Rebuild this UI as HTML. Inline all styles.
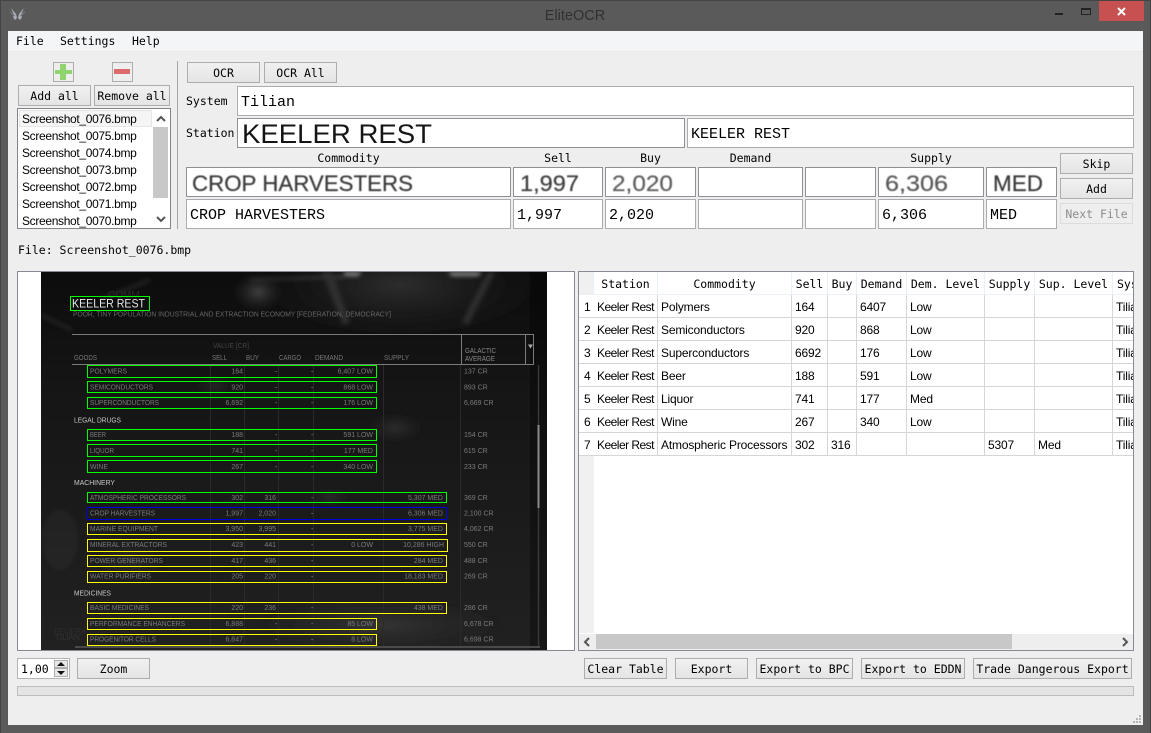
<!DOCTYPE html>
<html><head><meta charset="utf-8"><title>EliteOCR</title>
<style>
html,body{margin:0;padding:0;width:1151px;height:733px;overflow:hidden;background:#5a5a5a}
*{box-sizing:border-box}
#w{position:relative;width:1151px;height:733px;overflow:hidden;font-family:"DejaVu Sans Mono","Liberation Mono",monospace;font-size:11.5px;color:#000}
.a,.b,.i,.i2,.t,.c,.s,.k{position:absolute}
.b{background:linear-gradient(#f1f1f1,#e4e4e4);border:1px solid #adadad;text-align:center;line-height:20px;white-space:nowrap;overflow:hidden}
.i{background:#fff;border:1px solid #8f9095;padding-left:3px;white-space:nowrap}
.i2{background:#fff;border:1px solid #acacb0;padding-left:3px;white-space:nowrap;font-family:"Liberation Mono",monospace;font-size:15px;line-height:31px}
.t{white-space:nowrap;line-height:14px}
.c{white-space:nowrap;text-align:center;line-height:14px}
.s{font-family:"Liberation Sans",sans-serif;font-size:12px;letter-spacing:-.17px;white-space:nowrap;line-height:14px}
.l{letter-spacing:-.33px}
.k{font-family:"Liberation Sans",sans-serif;font-size:12px;letter-spacing:-.52px;white-space:nowrap;line-height:14px;left:597px}
.h{position:absolute;left:579px;width:554px;height:1px;background:#d6d6d6}
.v{position:absolute;top:272px;width:1px;background:#d6d6d6}
</style></head><body><div id="w">
<!-- window frame -->
<div class="a" style="left:0;top:0;width:1151px;height:1px;background:#444"></div>
<div class="a" style="left:0;top:0;width:1px;height:733px;background:#444"></div>
<div class="a" style="left:1150px;top:0;width:1px;height:733px;background:#444"></div>
<svg class="a" style="left:9px;top:7px" width="17" height="15" viewBox="0 0 17 15"><path d="M2 1 L7 7 L8 11 L6 13 L4 10 L5 8 Z M15 1 L10 7 L9 11 L11 13 L13 10 L12 8 Z" fill="#a9adb5"/><path d="M1 5 L6 9 M16 5 L11 9" stroke="#7d8289"/></svg>
<div class="c" style="left:500px;top:9px;width:150px;font:14.5px/15px 'Liberation Sans',sans-serif;color:#303030">EliteOCR</div>
<div class="a" style="left:1055px;top:13px;width:8px;height:2px;background:#222"></div>
<div class="a" style="left:1081px;top:8px;width:10px;height:7px;border:1px solid #222;border-top:2px solid #222"></div>
<div class="a" style="left:1099px;top:1px;width:45px;height:20px;background:#c75050"></div>
<svg class="a" style="left:1116px;top:6px" width="11" height="11"><path d="M2 2 L9 9 M9 2 L2 9" stroke="#fff" stroke-width="2"/></svg>
<!-- client -->
<div class="a" style="left:8px;top:31px;width:1135px;height:694px;background:#eeeeee"></div>
<div class="a" style="left:8px;top:31px;width:1135px;height:20px;background:#f4f5f7"></div>
<div class="a" style="left:8px;top:51px;width:1135px;height:1px;background:#e7e8ea"></div>
<div class="t" style="left:16px;top:34px">File</div>
<div class="t" style="left:60px;top:34px">Settings</div>
<div class="t" style="left:132px;top:34px">Help</div>

<!-- add / remove -->
<div class="a" style="left:53px;top:62px;width:21px;height:20px;background:#eee;border:1px solid #adadad"></div>
<div class="a" style="left:55px;top:70px;width:17px;height:4px;background:#8fd46f"></div>
<div class="a" style="left:60px;top:64px;width:6px;height:16px;background:#8fd46f"></div>
<div class="a" style="left:112px;top:62px;width:21px;height:20px;background:#eee;border:1px solid #adadad"></div>
<div class="a" style="left:114px;top:69px;width:16px;height:5px;background:#dc6c6c"></div>
<div class="b" style="left:18px;top:85px;width:73px;height:21px">Add all</div>
<div class="b" style="left:94px;top:85px;width:76px;height:21px">Remove all</div>

<!-- list -->
<div class="a" style="left:17px;top:108px;width:154px;height:121px;background:#fff;border:1px solid #80858c;outline:0;overflow:hidden"></div>
<div class="a" style="left:19px;top:110px;width:133px;height:17px;background:#f5f5f5;border:1px solid #e6e6e6"></div>
<div class="s l" style="left:22px;top:112px">Screenshot_0076.bmp</div>
<div class="s l" style="left:22px;top:129px">Screenshot_0075.bmp</div>
<div class="s l" style="left:22px;top:146px">Screenshot_0074.bmp</div>
<div class="s l" style="left:22px;top:163px">Screenshot_0073.bmp</div>
<div class="s l" style="left:22px;top:180px">Screenshot_0072.bmp</div>
<div class="s l" style="left:22px;top:197px">Screenshot_0071.bmp</div>
<div class="a" style="left:18px;top:211px;width:134px;height:17px;overflow:hidden"><div class="s l" style="left:4px;top:3px">Screenshot_0070.bmp</div></div>
<div class="a" style="left:153px;top:127px;width:15px;height:71px;background:#c8c8c8"></div>
<svg class="a" style="left:156px;top:115px" width="10" height="8"><path d="M1 6 L5 2 L9 6" fill="none" stroke="#555" stroke-width="2"/></svg>
<svg class="a" style="left:156px;top:215px" width="10" height="8"><path d="M1 2 L5 6 L9 2" fill="none" stroke="#555" stroke-width="2"/></svg>

<div class="a" style="left:177px;top:61px;width:1px;height:168px;background:#a5a5a5"></div>
<div class="b" style="left:187px;top:62px;width:73px;height:21px">OCR</div>
<div class="b" style="left:264px;top:62px;width:73px;height:21px">OCR All</div>

<div class="t" style="left:186px;top:94px">System</div>
<div class="t" style="left:186px;top:126px">Station</div>
<div class="i2" style="left:237px;top:86px;width:897px;height:30px">Tilian</div>
<div class="i" style="left:237px;top:118px;width:448px;height:30px"></div>
<div class="i2" style="left:687px;top:118px;width:447px;height:30px">KEELER REST</div>

<div class="c" style="left:186px;top:151px;width:325px">Commodity</div>
<div class="c" style="left:513px;top:151px;width:90px">Sell</div>
<div class="c" style="left:605px;top:151px;width:91px">Buy</div>
<div class="c" style="left:698px;top:151px;width:105px">Demand</div>
<div class="c" style="left:878px;top:151px;width:106px">Supply</div>

<div class="i" style="left:186px;top:167px;width:325px;height:30px"></div>
<div class="i" style="left:513px;top:167px;width:90px;height:30px"></div>
<div class="i" style="left:605px;top:167px;width:91px;height:30px"></div>
<div class="i" style="left:698px;top:167px;width:105px;height:30px"></div>
<div class="i" style="left:805px;top:167px;width:71px;height:30px"></div>
<div class="i" style="left:878px;top:167px;width:106px;height:30px"></div>
<div class="i" style="left:986px;top:167px;width:71px;height:30px"></div>

<div class="i2" style="left:186px;top:199px;width:325px;height:30px">CROP HARVESTERS</div>
<div class="i2" style="left:513px;top:199px;width:90px;height:30px">1,997</div>
<div class="i2" style="left:605px;top:199px;width:91px;height:30px">2,020</div>
<div class="i2" style="left:698px;top:199px;width:105px;height:30px"></div>
<div class="i2" style="left:805px;top:199px;width:71px;height:30px"></div>
<div class="i2" style="left:878px;top:199px;width:106px;height:30px">6,306</div>
<div class="i2" style="left:986px;top:199px;width:71px;height:30px">MED</div>

<svg class="a" style="left:0;top:0" width="1151" height="240" font-family="Liberation Sans,sans-serif">
<defs><filter id="b1"><feGaussianBlur stdDeviation=".45"/></filter></defs>
<text x="242" y="143" font-size="26.500" fill="#151515" textLength="190" lengthAdjust="spacingAndGlyphs">KEELER REST</text>
<g filter="url(#b1)" stroke-width=".2">
<text x="192" y="191" font-size="22" fill="#3a3a3a" stroke="#3a3a3a" textLength="221" lengthAdjust="spacingAndGlyphs">CROP HARVESTERS</text>
<text x="520" y="191" font-size="22" fill="#404040" stroke="#404040" textLength="59" lengthAdjust="spacingAndGlyphs">1,997</text>
<text x="612" y="191" font-size="22" fill="#5e5e5e" stroke="#5e5e5e" textLength="61" lengthAdjust="spacingAndGlyphs">2,020</text>
<text x="885" y="191" font-size="22" fill="#5a5a5a" stroke="#5a5a5a" textLength="63" lengthAdjust="spacingAndGlyphs">6,306</text>
<text x="993" y="191" font-size="22" fill="#3a3a3a" stroke="#3a3a3a" textLength="50" lengthAdjust="spacingAndGlyphs">MED</text>
</g></svg>

<div class="b" style="left:1060px;top:153px;width:73px;height:21px">Skip</div>
<div class="b" style="left:1060px;top:178px;width:73px;height:21px">Add</div>
<div class="b" style="left:1060px;top:203px;width:73px;height:21px;color:#8c8c8c;background:#eee;border-color:#dcdcdc">Next File</div>

<div class="t" style="left:18px;top:243px">File: Screenshot_0076.bmp</div>

<!-- image panel -->
<div class="a" style="left:17px;top:271px;width:558px;height:380px;background:#fff;border:1px solid #868a92"></div>
<svg class="a" style="left:41px;top:272px" width="506" height="378" viewBox="41 272 506 378" font-family="Liberation Sans,sans-serif">
<defs>
<radialGradient id="g1"><stop offset="0" stop-color="#6a6a6a" stop-opacity=".7"/><stop offset="1" stop-color="#333" stop-opacity="0"/></radialGradient>
<linearGradient id="bg" x1="0" y1="0" x2="0" y2="1"><stop offset="0" stop-color="#0c0c0c"/><stop offset=".3" stop-color="#151515"/><stop offset="1" stop-color="#212121"/></linearGradient>
<filter id="bl"><feGaussianBlur stdDeviation=".3"/></filter>
<filter id="bl2"><feGaussianBlur stdDeviation="2"/></filter>
</defs>
<rect x="41" y="272" width="506" height="378" fill="url(#bg)"/>
<rect x="530" y="272" width="17" height="378" fill="#000" opacity=".3"/>
<g filter="url(#bl2)">
<ellipse cx="400" cy="285" rx="150" ry="55" fill="url(#g1)" opacity=".5"/>
<ellipse cx="258" cy="292" rx="26" ry="20" fill="url(#g1)" opacity=".8"/>
<path d="M250 280 L345 278 L345 276 L250 279 Z" fill="#4a4a4a"/>
<path d="M343 272 L362 272 L358 276 L346 276Z M448 272 L482 272 L478 276 L452 276Z" fill="#888"/>
<path d="M322 272 L332 272 L350 322 L343 325Z" fill="#2e2e2e"/>
<path d="M495 272 L488 272 L462 322 L468 325Z" fill="#2e2e2e"/>
<ellipse cx="395" cy="428" rx="30" ry="16" fill="url(#g1)" opacity=".4"/>
<ellipse cx="215" cy="386" rx="22" ry="12" fill="url(#g1)" opacity=".3"/>
<ellipse cx="330" cy="497" rx="22" ry="10" fill="url(#g1)" opacity=".3"/>
<ellipse cx="380" cy="625" rx="130" ry="28" fill="url(#g1)" opacity=".4"/>
<ellipse cx="130" cy="560" rx="40" ry="25" fill="url(#g1)" opacity=".25"/>
<ellipse cx="60" cy="540" rx="18" ry="30" fill="#555" opacity=".12"/>
<path d="M41 315 L72 330 M100 300 L150 280" stroke="#262626" stroke-width="3"/>
</g>
<text x="108" y="298" font-size="10" fill="#2b2b2b">COMM</text>
<text x="55" y="640" font-size="8" fill="#333">TILIAN</text>
<text x="54" y="634" font-size="8" fill="#2e2e2e">FEDERA</text>
<!-- lines -->
<g stroke="#2a2a2a" stroke-width="1">
<path d="M210.5 364V648M244.5 364V648M278.5 364V648M313.5 364V648M383.5 364V648M460.5 364V648"/>
</g>
<g stroke="#7c7c7c" stroke-width="1" fill="none">
<path d="M72 334.5H533.5V364.5H72"/>
<path d="M461.5 334V364M525.5 334V364"/>
</g>
<path d="M538.5 365V648" stroke="#3a3a3a" stroke-width="1.4"/>
<path d="M538.5 425V508" stroke="#8a8a8a" stroke-width="2"/>
<path d="M75 647H540" stroke="#4a4a4a" stroke-width="2"/>
<path d="M528 344.5h5l-2.500 4z" fill="#aaa"/>
<g filter="url(#bl)" font-size="7" fill="#7d7d7d">
<text x="72" y="307.500" font-size="11.500" fill="#e6e6e6" textLength="73" lengthAdjust="spacingAndGlyphs">KEELER REST</text>
<text x="73" y="316.500" font-size="7" fill="#666" textLength="318" lengthAdjust="spacingAndGlyphs">POOR, TINY POPULATION INDUSTRIAL AND EXTRACTION ECONOMY [FEDERATION, DEMOCRACY]</text>
<text x="213" y="348" fill="#444" textLength="36" lengthAdjust="spacingAndGlyphs">VALUE [CR]</text>
<text x="74" y="360" fill="#777" textLength="23" lengthAdjust="spacingAndGlyphs">GOODS</text>
<text x="212" y="360" fill="#777" textLength="15" lengthAdjust="spacingAndGlyphs">SELL</text>
<text x="246" y="360" fill="#777" textLength="13" lengthAdjust="spacingAndGlyphs">BUY</text>
<text x="279" y="360" fill="#777" textLength="22" lengthAdjust="spacingAndGlyphs">CARGO</text>
<text x="315" y="360" fill="#777" textLength="28" lengthAdjust="spacingAndGlyphs">DEMAND</text>
<text x="384" y="360" fill="#777" textLength="25" lengthAdjust="spacingAndGlyphs">SUPPLY</text>
<text x="465" y="353" fill="#888" textLength="31" lengthAdjust="spacingAndGlyphs">GALACTIC</text>
<text x="465" y="361" fill="#888" textLength="30" lengthAdjust="spacingAndGlyphs">AVERAGE</text>
<g fill="#c8c8c8">
<text x="74" y="422.500" textLength="47" lengthAdjust="spacingAndGlyphs">LEGAL DRUGS</text>
<text x="74" y="485" textLength="41" lengthAdjust="spacingAndGlyphs">MACHINERY</text>
<text x="74" y="595.500" textLength="37" lengthAdjust="spacingAndGlyphs">MEDICINES</text>
</g>
<g fill="#7a7a7a">
<text x="90" y="373.500" textLength="37" lengthAdjust="spacingAndGlyphs">POLYMERS</text>
<text x="90" y="389.500" textLength="63" lengthAdjust="spacingAndGlyphs">SEMICONDUCTORS</text>
<text x="90" y="405" textLength="69" lengthAdjust="spacingAndGlyphs">SUPERCONDUCTORS</text>
<text x="90" y="437" textLength="16" lengthAdjust="spacingAndGlyphs">BEER</text>
<text x="90" y="453" textLength="24" lengthAdjust="spacingAndGlyphs">LIQUOR</text>
<text x="90" y="469" textLength="18" lengthAdjust="spacingAndGlyphs">WINE</text>
<text x="90" y="500" textLength="96" lengthAdjust="spacingAndGlyphs">ATMOSPHERIC PROCESSORS</text>
<text x="90" y="515.500" textLength="65" lengthAdjust="spacingAndGlyphs">CROP HARVESTERS</text>
<text x="90" y="531" textLength="68" lengthAdjust="spacingAndGlyphs">MARINE EQUIPMENT</text>
<text x="90" y="547" textLength="77" lengthAdjust="spacingAndGlyphs">MINERAL EXTRACTORS</text>
<text x="90" y="563" textLength="73" lengthAdjust="spacingAndGlyphs">POWER GENERATORS</text>
<text x="90" y="578.500" textLength="61" lengthAdjust="spacingAndGlyphs">WATER PURIFIERS</text>
<text x="90" y="610" textLength="59" lengthAdjust="spacingAndGlyphs">BASIC MEDICINES</text>
<text x="90" y="626" textLength="95" lengthAdjust="spacingAndGlyphs">PERFORMANCE ENHANCERS</text>
<text x="90" y="641.500" textLength="66" lengthAdjust="spacingAndGlyphs">PROGENITOR CELLS</text>
</g>
<g fill="#7a7a7a" text-anchor="end">
<text x="243" y="373.500">164</text><text x="243" y="389.500">920</text><text x="243" y="405">6,692</text><text x="243" y="437">188</text><text x="243" y="453">741</text><text x="243" y="469">267</text>
<text x="243" y="500">302</text><text x="243" y="515.500">1,997</text><text x="243" y="531">3,950</text><text x="243" y="547">423</text><text x="243" y="563">417</text><text x="243" y="578.500">205</text><text x="243" y="610">220</text><text x="243" y="626">6,888</text><text x="243" y="641.500">6,847</text>
<text x="276" y="500">316</text><text x="276" y="515.500">2,020</text><text x="276" y="531">3,995</text><text x="276" y="547">441</text><text x="276" y="563">436</text><text x="276" y="578.500">220</text><text x="276" y="610">236</text>
<text x="373" y="373.500">6,407 LOW</text><text x="373" y="389.500">868 LOW</text><text x="373" y="405">176 LOW</text><text x="373" y="437">591 LOW</text><text x="373" y="453">177 MED</text><text x="373" y="469">340 LOW</text>
<text x="373" y="547">0 LOW</text><text x="373" y="626">85 LOW</text><text x="373" y="641.500">8 LOW</text>
<text x="443" y="500">5,307 MED</text><text x="443" y="515.500">6,306 MED</text><text x="443" y="531">3,775 MED</text><text x="444" y="547">10,286 HIGH</text><text x="443" y="563">284 MED</text><text x="443" y="578.500">18,183 MED</text><text x="443" y="610">438 MED</text>
</g>
<g fill="#7a7a7a">
<text x="464" y="373.500">137 CR</text><text x="464" y="389.500">893 CR</text><text x="464" y="405">6,669 CR</text><text x="464" y="437">154 CR</text><text x="464" y="453">615 CR</text><text x="464" y="469">233 CR</text>
<text x="464" y="500">369 CR</text><text x="464" y="515.500">2,100 CR</text><text x="464" y="531">4,062 CR</text><text x="464" y="547">550 CR</text><text x="464" y="563">488 CR</text><text x="464" y="578.500">269 CR</text><text x="464" y="610">286 CR</text><text x="464" y="626">6,678 CR</text><text x="464" y="641.500">6,698 CR</text>
</g>
<g fill="#8a8a8a">
<text x="311" y="373.500">-</text><text x="311" y="389.500">-</text><text x="311" y="405">-</text><text x="311" y="437">-</text><text x="311" y="453">-</text><text x="311" y="469">-</text><text x="311" y="500">-</text><text x="311" y="515.500">-</text><text x="311" y="531">-</text><text x="311" y="547">-</text><text x="311" y="563">-</text><text x="311" y="578.500">-</text><text x="311" y="610">-</text><text x="311" y="626">-</text><text x="311" y="641.500">-</text>
<text x="275" y="373.500">-</text><text x="275" y="389.500">-</text><text x="275" y="405">-</text><text x="275" y="437">-</text><text x="275" y="453">-</text><text x="275" y="469">-</text><text x="275" y="626">-</text><text x="275" y="641.500">-</text>
</g>
</g>
<g fill="none" stroke-width="1" stroke="#00ff00" shape-rendering="crispEdges">
<rect x="70.500" y="296.500" width="79" height="14"/>
<rect x="87.500" y="365.500" width="289" height="12"/>
<rect x="87.500" y="381.500" width="289" height="11"/>
<rect x="87.500" y="397.500" width="289" height="11"/>
<rect x="87.500" y="429.500" width="289" height="11"/>
<rect x="87.500" y="444.500" width="289" height="12"/>
<rect x="87.500" y="460.500" width="289" height="12"/>
<rect x="87.500" y="492.500" width="359" height="10"/>
</g>
<rect x="87.500" y="507.500" width="359" height="12" fill="none" stroke="#0000d8" shape-rendering="crispEdges"/>
<g fill="none" stroke="#ffff00" shape-rendering="crispEdges">
<rect x="87.500" y="523.500" width="359" height="11"/>
<rect x="87.500" y="539.500" width="360" height="12"/>
<rect x="87.500" y="555.500" width="359" height="11"/>
<rect x="87.500" y="571.500" width="359" height="11"/>
<rect x="87.500" y="602.500" width="359" height="11"/>
<rect x="87.500" y="618.500" width="289" height="11"/>
<rect x="87.500" y="634.500" width="289" height="11"/>
</g>
</svg>

<!-- table -->
<div class="a" style="left:578px;top:271px;width:556px;height:380px;background:#fff;border:1px solid #868a92"></div>
<div class="a" style="left:579px;top:272px;width:15px;height:361px;background:#f0f0f0"></div>
<div class="a" style="left:594px;top:272px;width:539px;height:23px;background:#fff;border-bottom:1px solid #eef3fb"></div>
<div class="a" style="left:579px;top:295px;width:15px;height:161px;background:#fff"></div>
<div class="h" style="top:317px"></div><div class="h" style="top:340px"></div><div class="h" style="top:363px"></div><div class="h" style="top:386px"></div><div class="h" style="top:409px"></div><div class="h" style="top:432px"></div><div class="h" style="top:455px"></div>
<div class="v" style="left:657px;height:23px;background:#eaf0fa"></div><div class="v" style="left:791px;height:23px;background:#eaf0fa"></div><div class="v" style="left:827px;height:23px;background:#eaf0fa"></div><div class="v" style="left:856px;height:23px;background:#eaf0fa"></div><div class="v" style="left:906px;height:23px;background:#eaf0fa"></div><div class="v" style="left:984px;height:23px;background:#eaf0fa"></div><div class="v" style="left:1034px;height:23px;background:#eaf0fa"></div><div class="v" style="left:1112px;height:23px;background:#eaf0fa"></div><div class="v" style="left:593px;height:23px;background:#eaf0fa"></div>
<div class="v" style="left:657px;top:295px;height:161px"></div><div class="v" style="left:791px;top:295px;height:161px"></div><div class="v" style="left:827px;top:295px;height:161px"></div><div class="v" style="left:856px;top:295px;height:161px"></div><div class="v" style="left:906px;top:295px;height:161px"></div><div class="v" style="left:984px;top:295px;height:161px"></div><div class="v" style="left:1034px;top:295px;height:161px"></div><div class="v" style="left:1112px;top:295px;height:161px"></div>

<div class="c" style="left:594px;top:277px;width:63px">Station</div>
<div class="c" style="left:658px;top:277px;width:133px">Commodity</div>
<div class="c" style="left:792px;top:277px;width:35px">Sell</div>
<div class="c" style="left:828px;top:277px;width:28px">Buy</div>
<div class="c" style="left:857px;top:277px;width:49px">Demand</div>
<div class="c" style="left:907px;top:277px;width:77px">Dem. Level</div>
<div class="c" style="left:985px;top:277px;width:49px">Supply</div>
<div class="c" style="left:1035px;top:277px;width:77px">Sup. Level</div>
<div class="a" style="left:1113px;top:272px;width:20px;height:22px;overflow:hidden"><div class="t" style="left:4px;top:5px">System</div></div>

<div class="s" style="left:584px;top:300px">1</div><div class="s" style="left:584px;top:323px">2</div><div class="s" style="left:584px;top:346px">3</div><div class="s" style="left:584px;top:369px">4</div><div class="s" style="left:584px;top:392px">5</div><div class="s" style="left:584px;top:415px">6</div><div class="s" style="left:584px;top:438px">7</div>

<div class="k" style="top:300px">Keeler Rest</div><div class="k" style="top:323px">Keeler Rest</div><div class="k" style="top:346px">Keeler Rest</div><div class="k" style="top:369px">Keeler Rest</div><div class="k" style="top:392px">Keeler Rest</div><div class="k" style="top:415px">Keeler Rest</div><div class="k" style="top:438px">Keeler Rest</div>

<div class="s" style="left:661px;top:300px">Polymers</div><div class="s" style="left:661px;top:323px">Semiconductors</div><div class="s" style="left:661px;top:346px">Superconductors</div><div class="s" style="left:661px;top:369px">Beer</div><div class="s" style="left:661px;top:392px">Liquor</div><div class="s" style="left:661px;top:415px">Wine</div><div class="s" style="left:661px;top:438px">Atmospheric Processors</div>

<div class="s" style="left:795px;top:300px">164</div><div class="s" style="left:795px;top:323px">920</div><div class="s" style="left:795px;top:346px">6692</div><div class="s" style="left:795px;top:369px">188</div><div class="s" style="left:795px;top:392px">741</div><div class="s" style="left:795px;top:415px">267</div><div class="s" style="left:795px;top:438px">302</div>
<div class="s" style="left:831px;top:438px">316</div>

<div class="s" style="left:860px;top:300px">6407</div><div class="s" style="left:860px;top:323px">868</div><div class="s" style="left:860px;top:346px">176</div><div class="s" style="left:860px;top:369px">591</div><div class="s" style="left:860px;top:392px">177</div><div class="s" style="left:860px;top:415px">340</div>

<div class="s" style="left:910px;top:300px">Low</div><div class="s" style="left:910px;top:323px">Low</div><div class="s" style="left:910px;top:346px">Low</div><div class="s" style="left:910px;top:369px">Low</div><div class="s" style="left:910px;top:392px">Med</div><div class="s" style="left:910px;top:415px">Low</div>
<div class="s" style="left:988px;top:438px">5307</div><div class="s" style="left:1038px;top:438px">Med</div>

<div class="a" style="left:1113px;top:296px;width:20px;height:160px;overflow:hidden">
<div class="s" style="left:3px;top:4px">Tilian</div><div class="s" style="left:3px;top:27px">Tilian</div><div class="s" style="left:3px;top:50px">Tilian</div><div class="s" style="left:3px;top:73px">Tilian</div><div class="s" style="left:3px;top:96px">Tilian</div><div class="s" style="left:3px;top:119px">Tilian</div><div class="s" style="left:3px;top:142px">Tilian</div>
</div>

<!-- h scrollbar -->
<div class="a" style="left:579px;top:634px;width:554px;height:16px;background:#eee"></div>
<div class="a" style="left:596px;top:634px;width:416px;height:15px;background:#c8c8c8"></div>
<svg class="a" style="left:583px;top:637px" width="8" height="10"><path d="M6 1 L2 5 L6 9" fill="none" stroke="#555" stroke-width="2"/></svg>
<svg class="a" style="left:1121px;top:637px" width="8" height="10"><path d="M2 1 L6 5 L2 9" fill="none" stroke="#555" stroke-width="2"/></svg>

<!-- bottom -->
<div class="a" style="left:17px;top:658px;width:53px;height:21px;background:#fff;border:1px solid #b4b4b4"></div>
<div class="t" style="left:21px;top:662px">1,00</div>
<div class="a" style="left:54px;top:660px;width:14px;height:8px;background:#e8e8e8;border:1px solid #acacac"></div>
<div class="a" style="left:54px;top:668px;width:14px;height:9px;background:#e8e8e8;border:1px solid #acacac"></div>
<svg class="a" style="left:56px;top:662px" width="10" height="14"><path d="M5 0 L9 4 H1Z M1 9 H9 L5 13Z" fill="#111"/></svg>
<div class="b" style="left:77px;top:658px;width:73px;height:21px">Zoom</div>
<div class="b" style="left:584px;top:658px;width:83px;height:21px">Clear Table</div>
<div class="b" style="left:675px;top:658px;width:73px;height:21px">Export</div>
<div class="b" style="left:756px;top:658px;width:97px;height:21px">Export to BPC</div>
<div class="b" style="left:861px;top:658px;width:104px;height:21px">Export to EDDN</div>
<div class="b" style="left:973px;top:658px;width:159px;height:21px">Trade Dangerous Export</div>
<div class="a" style="left:17px;top:686px;width:1117px;height:10px;background:#e4e4e4;border:1px solid #bcbcbc"></div>
<svg class="a" style="left:1132px;top:714px" width="10" height="10"><path d="M7 1h2v2h-2zM4 4h2v2h-2zM7 4h2v2h-2zM1 7h2v2h-2zM4 7h2v2h-2zM7 7h2v2h-2z" fill="#b5b5b5"/></svg>
</div></body></html>
